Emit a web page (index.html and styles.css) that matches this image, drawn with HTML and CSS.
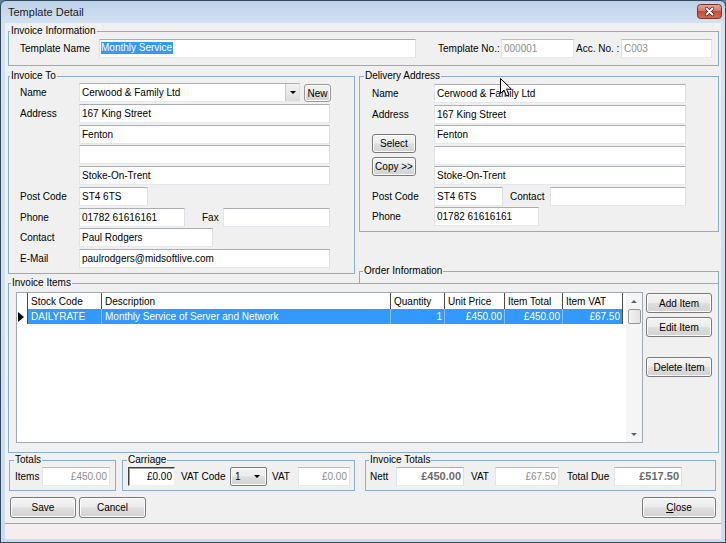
FILE: index.html
```html
<!DOCTYPE html>
<html>
<head>
<meta charset="utf-8">
<title>Template Detail</title>
<link rel="stylesheet" href="styles.css">
</head>
<body>
<div class="window">
  <div class="titlebar">
    <span class="title">Template Detail</span>
    <span class="xbtn">
      <svg width="25" height="15" viewBox="0 0 25 15">
        <defs>
          <linearGradient id="xg" x1="0" y1="0" x2="0" y2="1">
            <stop offset="0" stop-color="#e9a99c"/>
            <stop offset="0.45" stop-color="#d47866"/>
            <stop offset="0.5" stop-color="#c24b36"/>
            <stop offset="1" stop-color="#d56e58"/>
          </linearGradient>
        </defs>
        <rect x="0.5" y="0.5" width="24" height="14" rx="3" fill="url(#xg)" stroke="#7a3226"/>
        <path d="M9.5 4.5 L15.5 10.5 M15.5 4.5 L9.5 10.5" stroke="#5a1d14" stroke-width="3.2" stroke-linecap="round"/>
        <path d="M9.5 4.5 L15.5 10.5 M15.5 4.5 L9.5 10.5" stroke="#ffffff" stroke-width="1.8" stroke-linecap="round"/>
      </svg>
    </span>
  </div>

  <div class="client">
    <div class="group g-info">
      <span class="legend lg-1">Invoice Information</span>
      <span class="lbl w-tn">Template Name</span>
      <span class="tb w-tname"><span class="sel">Monthly Service</span></span>
      <span class="lbl w-tno">Template No.:</span>
      <span class="tb dis w-tnoval">000001</span>
      <span class="lbl w-acc">Acc. No. :</span>
      <span class="tb dis w-accval">C003</span>
    </div>

    <div class="row2">
      <div class="group g-to">
        <span class="legend lg-1">Invoice To</span>
        <div class="form-to">
          <span class="lbl">Name</span>
          <div class="cell">
            <div class="combo">
              <span class="ctext">Cerwood &amp; Family Ltd</span>
              <span class="ddbtn"><span class="arrow-down"></span></span>
            </div>
            <span class="btn btn-new">New</span>
          </div>
          <span class="lbl">Address</span>
          <span class="tb w-full">167 King Street</span>
          <span></span>
          <span class="tb w-full">Fenton</span>
          <span></span>
          <span class="tb w-full"></span>
          <span></span>
          <span class="tb w-full">Stoke-On-Trent</span>
          <span class="lbl">Post Code</span>
          <div class="cell"><span class="tb w-pc">ST4 6TS</span></div>
          <span class="lbl">Phone</span>
          <div class="cell">
            <span class="tb w-phone">01782 61616161</span>
            <span class="lbl w-fax">Fax</span>
            <span class="tb w-faxval"></span>
          </div>
          <span class="lbl">Contact</span>
          <div class="cell"><span class="tb w-contact">Paul Rodgers</span></div>
          <span class="lbl">E-Mail</span>
          <span class="tb w-full">paulrodgers@midsoftlive.com</span>
        </div>
      </div>

      <div class="rcol">
        <div class="group g-del">
          <span class="legend lg-5">Delivery Address</span>
          <div class="form-del">
            <span class="lbl">Name</span>
            <span class="tb w-dfull">Cerwood &amp; Family Ltd</span>
            <span class="lbl">Address</span>
            <span class="tb w-dfull">167 King Street</span>
            <div class="del-btns">
              <span class="btn btn-sm">Select</span>
              <span class="btn btn-sm btn-copy">Copy &gt;&gt;</span>
            </div>
            <span class="tb w-dfull">Fenton</span>
            <span class="tb w-dfull"></span>
            <span class="tb w-dfull">Stoke-On-Trent</span>
            <span class="lbl">Post Code</span>
            <div class="cell">
              <span class="tb w-pc">ST4 6TS</span>
              <span class="lbl w-dcontact">Contact</span>
              <span class="tb w-dcontactval"></span>
            </div>
            <span class="lbl">Phone</span>
            <div class="cell"><span class="tb w-dphone">01782 61616161</span></div>
          </div>
        </div>
        <div class="group g-order">
          <span class="legend lg-4">Order Information</span>
        </div>
      </div>
    </div>

    <div class="group g-items">
      <span class="legend lg-2">Invoice Items</span>
      <div class="dbgrid">
        <div class="gtable">
          <div class="grow ghead">
            <div class="gc ind"></div>
            <div class="gc c-code">Stock Code</div>
            <div class="gc c-desc">Description</div>
            <div class="gc c-qty">Quantity</div>
            <div class="gc c-unit">Unit Price</div>
            <div class="gc c-tot">Item Total</div>
            <div class="gc c-vat">Item VAT</div>
          </div>
          <div class="grow gsel">
            <div class="gc ind"><span class="tri"></span></div>
            <div class="gc c-code">DAILYRATE</div>
            <div class="gc c-desc">Monthly Service of Server and Network</div>
            <div class="gc c-qty num">1</div>
            <div class="gc c-unit num">£450.00</div>
            <div class="gc c-tot num">£450.00</div>
            <div class="gc c-vat num">£67.50</div>
          </div>
        </div>
        <div class="vscroll">
          <div class="sb-btn"><span class="arrow-up"></span></div>
          <div class="sb-thumb"></div>
          <div class="sb-track"></div>
          <div class="sb-btn"><span class="arrow-dn"></span></div>
        </div>
      </div>
      <div class="ibtns">
        <span class="btn btn-add">Add Item</span>
        <span class="btn btn-edit">Edit Item</span>
        <span class="btn btn-del">Delete Item</span>
      </div>
    </div>

    <div class="totrow">
      <div class="group g-totals">
        <span class="legend lg-5">Totals</span>
        <span class="lbl w-items">Items</span>
        <span class="tb dis r w-itemsval">£450.00</span>
      </div>
      <div class="group g-carr">
        <span class="legend lg-5">Carriage</span>
        <span class="tb sunk r w-carr">£0.00</span>
        <span class="lbl w-vatcode">VAT Code</span>
        <span class="btn vcombo"><span>1</span><span class="arrow-down"></span></span>
        <span class="lbl w-cvat">VAT</span>
        <span class="tb dis r w-cvatval">£0.00</span>
      </div>
      <div class="group g-invt">
        <span class="legend lg-4">Invoice Totals</span>
        <span class="lbl w-nett">Nett</span>
        <span class="tb bold r w-nettval">£450.00</span>
        <span class="lbl w-ivat">VAT</span>
        <span class="tb dis r w-ivatval">£67.50</span>
        <span class="lbl w-due">Total Due</span>
        <span class="tb bold r w-dueval">£517.50</span>
      </div>
    </div>

    <div class="btnrow">
      <span class="btn btn-save">Save</span>
      <span class="btn btn-cancel">Cancel</span>
      <span class="btn btn-close"><u>C</u>lose</span>
    </div>

    <div class="status"></div>
  </div>

  <svg class="cursor" width="13" height="20" viewBox="0 0 13 20">
    <path d="M0.5 0.5 L0.5 15.5 L4 12 L6.5 18 L9 17 L6.5 11.2 L11.5 11.2 Z" fill="#ffffff" stroke="#000000" stroke-width="1" stroke-linejoin="round"/>
  </svg>
</div>
</body>
</html>
```

FILE: styles.css
```css
* { box-sizing: border-box; }
html, body { margin: 0; padding: 0; }
body {
  width: 726px;
  height: 543px;
  overflow: hidden;
  background: #5f7c99;
  font-family: "Liberation Sans", Arial, sans-serif;
  font-size: 10px;
  color: #000;
}
.window {
  position: relative;
  width: 726px;
  height: 543px;
  border: 1px solid #34495f;
  border-radius: 6px 6px 0 0;
  background: linear-gradient(#bcd1e8, #d3e2f2 22px, #cbdcee);
  display: flex;
  flex-direction: column;
}
.titlebar {
  flex: none;
  height: 22px;
  display: flex;
  align-items: center;
  padding: 0 3px 0 7px;
}
.title { flex: 1; font-size: 11px; color: #1a1a1a; }
.xbtn { display: flex; margin-top: -2px; }

.client {
  flex: none;
  height: 516px;
  margin: 0 4px;
  background: #f0f0f0;
  display: flex;
  flex-direction: column;
}

/* group boxes */
.group {
  position: relative;
  flex: none;
  border: 1px solid #88aed7;
}
.legend {
  position: absolute;
  top: -7px;
  left: 1px;
  padding: 0 1px;
  line-height: 12px;
  background: #f0f0f0;
  white-space: nowrap;
}
.lg-1 { left: 1px; }
.lg-2 { left: 2px; }
.lg-4 { left: 3px; }
.lg-5 { left: 4px; }

/* labels and text boxes */
.lbl {
  flex: none;
  height: 19px;
  display: flex;
  align-items: center;
  white-space: nowrap;
}
.tb {
  flex: none;
  display: block;
  height: 19px;
  background: #fff;
  border: 1px solid;
  border-color: #abadb3 #dbdfe6 #e3e9ef #e2e3ea;
  padding: 0 2px;
  line-height: 17px;
  white-space: nowrap;
  overflow: hidden;
}
.tb.dis { color: #8e8e8e; border-color: #b9bcc2 #e0e3e8 #e6e9ee #e2e4e9; }
.tb.r { text-align: right; }
.tb.bold { font-weight: bold; font-size: 11px; color: #6a6a6a; }
.tb.sunk {
  border-color: #404040 #f0f0f0 #f0f0f0 #404040;
  box-shadow: inset 1px 1px 0 #a0a0a0;
}
.sel {
  display: inline-block;
  line-height: 12px;
  background: #3399ff;
  color: #fff;
  padding: 0 1px 0 0;
  vertical-align: middle;
  margin-top: -2px;
}

/* buttons */
.btn {
  flex: none;
  display: flex;
  align-items: center;
  justify-content: center;
  border: 1px solid #7a7a7a;
  border-radius: 3px;
  background: linear-gradient(#f4f4f4 0%, #ececec 48%, #dedede 52%, #d2d2d2 100%);
  box-shadow: inset 0 0 0 1px #fbfbfb;
  white-space: nowrap;
}
.btn u { text-decoration: underline; }

/* invoice information */
.g-info {
  margin: 8px 0 0 3px;
  width: 711px;
  height: 35px;
  padding: 7px 0 0 11px;
  display: flex;
  align-items: flex-start;
}
.w-tn { width: 79px; }
.w-tname { width: 317px; padding-left: 1px; }
.w-tno { width: 63px; margin-left: 22px; }
.w-tnoval { width: 73px; }
.w-acc { width: 45px; margin-left: 2px; }
.w-accval { width: 91px; }

/* second row */
.row2 {
  flex: none;
  display: flex;
  align-items: flex-start;
  margin-top: 10px;
}
.g-to {
  margin-left: 3px;
  width: 347px;
  height: 198px;
  padding: 6px 0 0 11px;
}
.form-to {
  display: grid;
  grid-template-columns: 59px 251px;
  grid-auto-rows: 19px;
  row-gap: 1.75px;
}
.cell { display: flex; align-items: flex-start; }
.w-full { width: 251px; }
.w-pc { width: 69px; }
.w-phone { width: 106px; }
.w-fax { width: 21px; margin-left: 17px; }
.w-faxval { width: 107px; }
.w-contact { width: 134px; }

.combo {
  flex: none;
  width: 221px;
  height: 19px;
  display: flex;
  background: #fff;
  border: 1px solid;
  border-color: #abadb3 #dbdfe6 #e3e9ef #e2e3ea;
}
.ctext { flex: 1; padding: 0 2px; line-height: 17px; white-space: nowrap; }
.ddbtn {
  width: 14px;
  border-left: 1px solid #c8c8c8;
  background: linear-gradient(#f4f4f4, #dcdcdc);
  display: flex;
  align-items: center;
  justify-content: center;
}
.arrow-down {
  width: 0;
  height: 0;
  border-left: 3px solid transparent;
  border-right: 3px solid transparent;
  border-top: 3px solid #000;
}
.btn-new { width: 27px; height: 18px; margin: 1px 0 0 4px; border-color: #9a9a9a; }

.rcol {
  margin-left: 4px;
  width: 360px;
  display: flex;
  flex-direction: column;
}
.g-del {
  width: 360px;
  height: 156px;
  padding: 7px 0 0 12px;
}
.form-del {
  display: grid;
  grid-template-columns: 62px 252px;
  grid-auto-rows: 19px;
  row-gap: 1.5px;
}
.w-dfull { width: 252px; }
.del-btns {
  grid-column: 1;
  grid-row: 3 / 6;
  display: flex;
  flex-direction: column;
  padding-top: 9px;
}
.btn-sm { width: 44px; height: 19px; }
.btn-copy { margin-top: 4px; }
.w-dcontact { width: 40px; margin-left: 7px; }
.w-dcontactval { width: 136px; }
.w-dphone { width: 105px; }

.g-order {
  margin-top: 39px;
  width: 360px;
  height: 12px;
  border-bottom: none;
}

/* invoice items */
.g-items {
  margin-left: 3px;
  width: 711px;
  height: 170px;
  padding: 8px 0 0 7px;
  display: flex;
  align-items: flex-start;
}
.dbgrid {
  flex: none;
  width: 627px;
  height: 151px;
  border: 1px solid #a3a9b1;
  background: #fff;
  display: flex;
}
.gtable { flex: 1; }
.grow { display: flex; }
.ghead { height: 16px; }
.gsel { height: 15px; }
.gc {
  flex: none;
  height: 100%;
  border-right: 1px solid #4a4a4a;
  padding: 0 3px;
  display: flex;
  align-items: center;
  white-space: nowrap;
  overflow: hidden;
}
.ind { width: 11px; padding: 0 0 0 1px; }
.c-code { width: 74px; }
.c-desc { width: 289px; }
.c-qty { width: 54px; }
.c-unit { width: 60px; }
.c-tot { width: 58px; }
.c-vat { width: 60px; }
.num { justify-content: flex-end; padding-right: 2px; }
.gsel .gc:not(.ind) {
  background: #3399ff;
  color: #fff;
  border-right-color: #86c1ff;
}
.gsel .c-vat { border-right-color: #4a4a4a !important; }
.tri {
  width: 0;
  height: 0;
  border-top: 5px solid transparent;
  border-bottom: 5px solid transparent;
  border-left: 6px solid #000;
}
.vscroll {
  flex: none;
  width: 16px;
  background: #f5f5f5;
  display: flex;
  flex-direction: column;
}
.sb-btn {
  height: 16px;
  display: flex;
  align-items: center;
  justify-content: center;
}
.arrow-up {
  width: 0;
  height: 0;
  border-left: 3px solid transparent;
  border-right: 3px solid transparent;
  border-bottom: 3px solid #606060;
}
.arrow-dn {
  width: 0;
  height: 0;
  border-left: 3px solid transparent;
  border-right: 3px solid transparent;
  border-top: 3px solid #606060;
}
.sb-thumb {
  height: 15px;
  margin: 0 1px 0 2px;
  border: 1px solid #979797;
  border-radius: 2px;
  background: linear-gradient(90deg, #f3f3f3, #e2e2e2);
}
.sb-track { flex: 1; }

.ibtns {
  margin-left: 3px;
  width: 66px;
  display: flex;
  flex-direction: column;
}
.btn-add { height: 20px; margin-top: 1px; }
.btn-edit { height: 20px; margin-top: 4px; }
.btn-del { height: 20px; margin-top: 20px; }

/* totals row */
.totrow {
  flex: none;
  display: flex;
  margin-top: 7px;
  height: 31px;
}
.g-totals {
  margin-left: 4px;
  width: 107px;
  padding: 6px 0 0 5px;
  display: flex;
  align-items: flex-start;
}
.w-items { width: 27px; }
.w-itemsval { width: 68px; }
.g-carr {
  margin-left: 6px;
  width: 233px;
  padding: 6px 0 0 5px;
  display: flex;
  align-items: flex-start;
}
.w-carr { width: 47px; color: #000; }
.w-vatcode { width: 49px; margin-left: 6px; }
.vcombo {
  width: 37px;
  height: 19px;
  justify-content: space-between;
  padding: 0 6px 0 4px;
  border-radius: 2px;
}
.w-cvat { width: 26px; margin-left: 5px; }
.w-cvatval { width: 52px; }
.g-invt {
  margin-left: 10px;
  width: 351px;
  padding: 6px 0 0 4px;
  display: flex;
  align-items: flex-start;
}
.w-nett { width: 26px; }
.w-nettval { width: 68px; }
.w-ivat { width: 24px; margin-left: 7px; }
.w-ivatval { width: 64px; }
.w-due { width: 47px; margin-left: 8px; }
.w-dueval { width: 68px; }

/* bottom buttons */
.btnrow {
  flex: none;
  display: flex;
  margin-top: 6px;
  height: 21px;
  padding: 0 5px;
}
.btn-save { width: 66px; }
.btn-cancel { width: 67px; margin-left: 3px; }
.btn-close { width: 74px; margin-left: auto; }

.status {
  flex: 1;
  margin-top: 5px;
  border-top: 1px solid #a0a0a0;
  background: #f6eeee;
}

.cursor {
  position: absolute;
  left: 499px;
  top: 77px;
}
```
